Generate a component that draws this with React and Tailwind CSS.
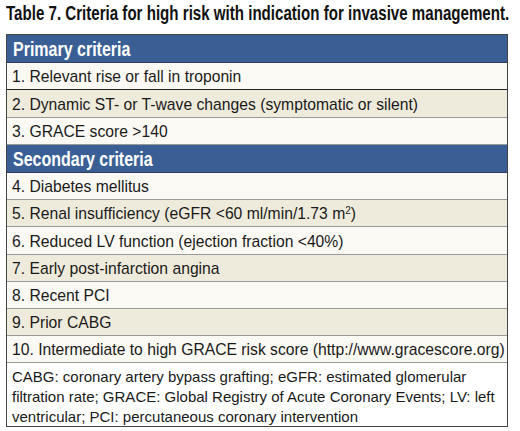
import React from "react";

const primary = [
  ["1. Relevant rise or fall in troponin", "h-[27px]"],
  ["2. Dynamic ST- or T-wave changes (symptomatic or silent)", "h-[28px]"],
  ["3. GRACE score >140", "h-[27px]"],
];

const secondary = [
  ["4. Diabetes mellitus", "h-[27px]"],
  [<>5. Renal insufficiency (eGFR &lt;60 ml/min/1.73 m<sup className="text-[10px]">2</sup>)</>, "h-[27px]"],
  ["6. Reduced LV function (ejection fraction <40%)", "h-[28px]"],
  ["7. Early post-infarction angina", "h-[27px]"],
  ["8. Recent PCI", "h-[27px]"],
  ["9. Prior CABG", "h-[27px]"],
  ["10. Intermediate to high GRACE risk score (http://www.gracescore.org)", "h-[27px]"],
];

function Header({ children }) {
  return (
    <div className="h-[28px] bg-[#3a5f95] border-b border-[#2c3e5c] flex items-center px-[6px] pt-[1px] overflow-hidden">
      <span className="inline-block whitespace-nowrap origin-left scale-x-[0.8] text-white text-[20px] font-bold">
        {children}
      </span>
    </div>
  );
}

function Row({ children, alt, dark, h }) {
  return (
    <div
      className={`${h} flex items-center px-[5px] pt-[2px] text-[15.7px] text-[#1a1a1a] border-b ${
        dark ? "border-[#222]" : "border-[#9a9a9a]"
      } ${alt ? "bg-[#efebdc]" : "bg-[#fbf9f3]"}`}
    >
      <span className="whitespace-nowrap">{children}</span>
    </div>
  );
}

export default function App() {
  return (
    <div className="w-[520px] h-[431px] overflow-hidden bg-white pl-[6px] pt-[1px] font-['Liberation_Sans',Arial,sans-serif]">
      <h1 className="h-[25px] overflow-visible">
        <span className="inline-block whitespace-nowrap origin-left scale-x-[0.755] text-[20px] font-bold leading-[24px] text-[#111]">
          Table 7. Criteria for high risk with indication for invasive management.
        </span>
      </h1>
      <div className="mt-[8px] w-[502px] border border-[#444]">
        <Header>Primary criteria</Header>
        {primary.map(([t, h], i) => (
          <Row key={i} h={h} alt={i % 2 === 1} dark={i === 0}>
            {t}
          </Row>
        ))}
        <Header>Secondary criteria</Header>
        {secondary.map(([t, h], i) => (
          <Row key={i} h={h} alt={i % 2 === 1}>
            {t}
          </Row>
        ))}
        <div className="h-[63px] px-[5px] pt-[4px] text-[15px] leading-[20px] text-[#1a1a1a] bg-white">
          CABG: coronary artery bypass grafting; eGFR: estimated glomerular
          <br />
          filtration rate; GRACE: Global Registry of Acute Coronary Events; LV: left
          <br />
          ventricular; PCI: percutaneous coronary intervention
        </div>
      </div>
    </div>
  );
}
